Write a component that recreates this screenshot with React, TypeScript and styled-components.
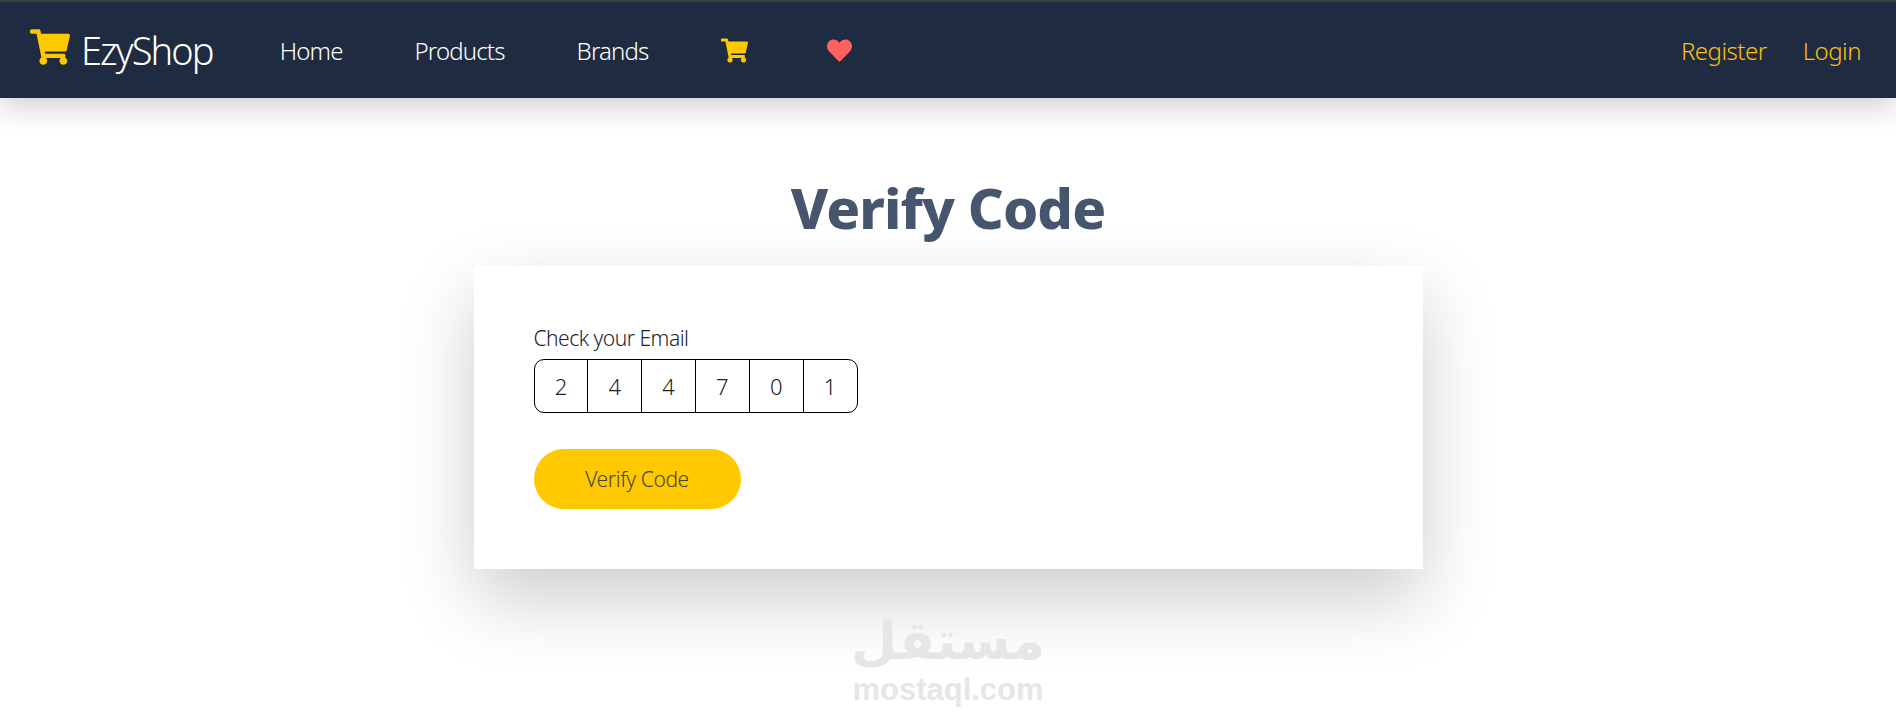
import React from "react";
import styled, { createGlobalStyle } from "styled-components";
import { FaShoppingCart, FaHeart } from "react-icons/fa";

const digits = ["2", "4", "4", "7", "0", "1"];

const GlobalStyle = createGlobalStyle`
  html, body {
    margin: 0;
    padding: 0;
    background: #fff;
    overflow: hidden;
  }
  * { box-sizing: border-box; }
  body {
    font-family: "Noto Sans", "Open Sans", sans-serif;
    font-weight: 300;
  }
`;

const Page = styled.div`
  position: relative;
  height: 721px;
  overflow: hidden;
`;

const Navbar = styled.nav`
  height: 98px;
  border-top: 2px solid #3d4043;
  background: #1e2b40;
  display: flex;
  align-items: center;
  padding: 0 35px 0 30px;
  box-shadow: 0 8px 30px rgba(0, 0, 0, 0.2);
  position: relative;
  z-index: 2;
`;

const Brand = styled.a`
  display: flex;
  align-items: center;
  gap: 11px;
  color: #fff;
  font-size: 38px;
  letter-spacing: -1.9px;
  margin-right: 67px;
  svg {
    color: #ffc800;
    font-size: 40px;
    margin-top: -6px;
  }
`;

const NavLinks = styled.div`
  display: flex;
  align-items: center;
  gap: 72px;
  flex: 1;
`;

const NavLink = styled.a`
  color: #fff;
  font-size: 24px;
  letter-spacing: -0.85px;
`;

const AuthLink = styled.a`
  color: #ffbf10;
  font-size: 24px;
  letter-spacing: -0.5px;
`;

const CartLink = styled.a`
  display: flex;
  color: #ffc800;
  font-size: 27px;
  margin-left: 1px;
  margin-right: 5px;
`;

const HeartLink = styled.a`
  display: flex;
  color: #ff6161;
  font-size: 25px;
  margin-left: 2px;
`;

const AuthLinks = styled.div`
  display: flex;
  gap: 36px;
`;

const Main = styled.main`
  display: flex;
  flex-direction: column;
  align-items: center;
`;

const Heading = styled.h1`
  margin: 71px 0 0;
  height: 97px;
  color: #47566f;
  font-size: 56px;
  font-weight: 800;
  line-height: 76px;
  letter-spacing: -0.9px;
`;

const Card = styled.form`
  width: 949px;
  height: 303px;
  padding: 59px 60px;
  background: #fff;
  box-shadow: 0 30px 70px rgba(0, 0, 0, 0.2);
  position: relative;
  z-index: 1;
`;

const Label = styled.label`
  display: block;
  color: #1c2230;
  font-size: 21px;
  line-height: 27px;
  letter-spacing: -0.5px;
  margin-bottom: 7px;
`;

const CodeBox = styled.div`
  display: flex;
  width: 324px;
  height: 54px;
  border: 1px solid #000;
  border-radius: 10px;
  margin-bottom: 36px;
`;

const Digit = styled.span`
  flex: 1;
  display: flex;
  align-items: center;
  justify-content: center;
  color: #222;
  font-size: 22px;
  & + & {
    border-left: 1px solid #000;
  }
`;

const VerifyButton = styled.button`
  width: 207px;
  height: 60px;
  border: none;
  border-radius: 30px;
  background: #ffc800;
  color: #47462f;
  font-family: inherit;
  font-weight: 300;
  font-size: 21px;
  letter-spacing: -0.4px;
`;

const Watermark = styled.div`
  position: absolute;
  left: 853px;
  top: 608px;
  width: 190px;
  display: flex;
  flex-direction: column;
  align-items: center;
  color: #e6e6e6;
  z-index: 3;
`;

const WatermarkArabic = styled.div`
  font-family: "DejaVu Sans", sans-serif;
  font-weight: 700;
  font-size: 53px;
  line-height: 66px;
`;

const WatermarkLatin = styled.div`
  font-family: "Liberation Sans", sans-serif;
  font-weight: 700;
  font-size: 31px;
  line-height: 32px;
`;

export default function App() {
  return (
    <Page>
      <GlobalStyle />
      <Navbar>
        <Brand>
          <FaShoppingCart />
          EzyShop
        </Brand>
        <NavLinks>
          <NavLink>Home</NavLink>
          <NavLink>Products</NavLink>
          <NavLink>Brands</NavLink>
          <CartLink>
            <FaShoppingCart />
          </CartLink>
          <HeartLink>
            <FaHeart />
          </HeartLink>
        </NavLinks>
        <AuthLinks>
          <AuthLink>Register</AuthLink>
          <AuthLink>Login</AuthLink>
        </AuthLinks>
      </Navbar>
      <Main>
        <Heading>Verify Code</Heading>
        <Card>
          <Label>Check your Email</Label>
          <CodeBox>
            {digits.map((d, i) => (
              <Digit key={i}>{d}</Digit>
            ))}
          </CodeBox>
          <VerifyButton type="button">Verify Code</VerifyButton>
        </Card>
      </Main>
      <Watermark>
        <WatermarkArabic>مستقل</WatermarkArabic>
        <WatermarkLatin>mostaql.com</WatermarkLatin>
      </Watermark>
    </Page>
  );
}
